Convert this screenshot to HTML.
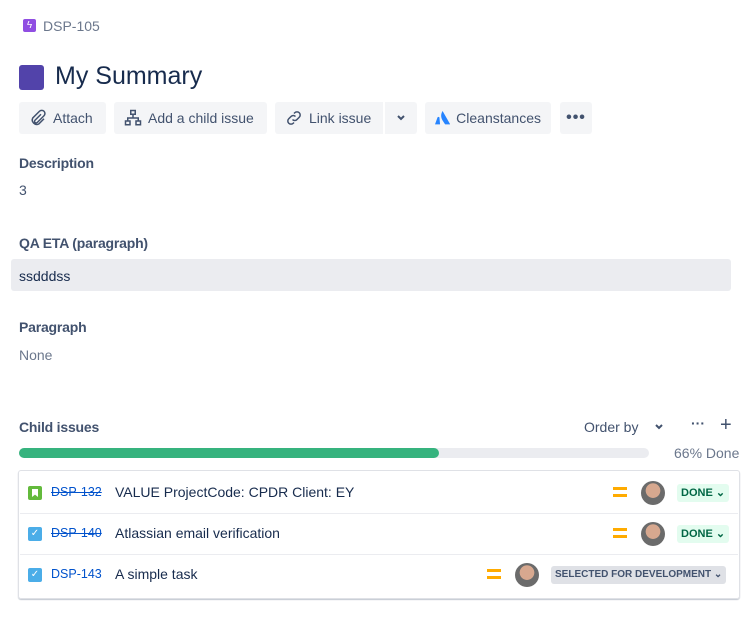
<!DOCTYPE html><html><head><style>
body{margin:0;width:756px;height:625px;background:#fff;font-family:"Liberation Sans",sans-serif;color:#172b4d;position:relative;overflow:hidden}
.a{position:absolute;white-space:nowrap}
.btn{position:absolute;top:102px;height:32px;background:#f4f5f7;border-radius:3px;font-size:14px;color:#42526e;display:flex;align-items:center;gap:6px;padding:0 10px;box-sizing:border-box}
.lbl{font-size:14px;font-weight:bold;color:#42526e;letter-spacing:-0.2px}
.row{position:absolute;left:20px;width:718px;height:41px;border-bottom:1px solid #ebecf0;font-size:14px}
.key{position:absolute;left:31px;top:13px;font-size:12.5px;color:#0052cc}
.sum{position:absolute;left:95px;top:12px;color:#172b4d}
.pri{position:absolute;width:14px;height:3px;background:#ffab00}
.av{position:absolute;width:24px;height:24px;border-radius:50%;background:radial-gradient(circle at 50% 40%,#d7a88f 0 38%,#6b6b6b 40%);}
.st{position:absolute;height:18px;border-radius:3px;font-size:11px;font-weight:bold;line-height:18px;padding:0 4px}
</style></head><body>
<div class="a" style="left:23px;top:19px;width:13px;height:13px;background:#904ee2;border-radius:2px;color:#fff;font-size:10px;text-align:center;line-height:13px">ϟ</div>
<div class="a" style="left:43px;top:18px;font-size:14px;color:#6b778c">DSP-105</div>
<div class="a" style="left:19px;top:65px;width:25px;height:25px;background:#5243aa;border-radius:3px"></div>
<div class="a" style="left:55px;top:62px;font-size:25px;color:#172b4d">My Summary</div>
<div class="btn" style="left:19px;width:87px"><svg width="18" height="18" viewBox="0 0 24 24" fill="none" stroke="#42526e" stroke-width="2"><path d="M16 7l-8 8a2 2 0 003 3l9-9a4 4 0 00-6-6l-9 9a6 6 0 008 8l7-7"/></svg>Attach</div>
<div class="btn" style="left:114px;width:153px"><svg width="18" height="18" viewBox="0 0 24 24" fill="none" stroke="#42526e" stroke-width="2"><rect x="9" y="2" width="6" height="5"/><rect x="2" y="16" width="6" height="5"/><rect x="16" y="16" width="6" height="5"/><path d="M12 7v5M5 16v-4h14v4"/></svg>Add a child issue</div>
<div class="btn" style="left:275px;width:108px;border-radius:3px 0 0 3px"><svg width="18" height="18" viewBox="0 0 24 24" fill="none" stroke="#42526e" stroke-width="2"><path d="M10 14a4 4 0 006 0l3-3a4 4 0 00-6-6l-1 1M14 10a4 4 0 00-6 0l-3 3a4 4 0 006 6l1-1"/></svg>Link issue</div>
<div class="btn" style="left:385px;width:32px;border-radius:0 3px 3px 0;justify-content:center"><svg width="10" height="8" viewBox="0 0 10 8"><path d="M2 2l3 3 3-3" fill="none" stroke="#42526e" stroke-width="2"/></svg></div>
<div class="btn" style="left:425px;width:126px"><svg width="18" height="18" viewBox="0 0 24 24"><path d="M7 11c-1-1-2-1-3 0L0 22h8zM12 1c-3 5-3 10 0 15l4 6h8z" fill="#2684ff"/></svg>Cleanstances</div>
<div class="btn" style="left:560px;width:32px;justify-content:center;font-weight:bold;font-size:16px;letter-spacing:1px">•••</div>
<div class="a lbl" style="left:19px;top:155px">Description</div>
<div class="a" style="left:19px;top:182px;font-size:14px;color:#42526e">3</div>
<div class="a lbl" style="left:19px;top:235px">QA ETA (paragraph)</div>
<div class="a" style="left:11px;top:259px;width:720px;height:32px;background:#ebecf0;border-radius:3px"></div>
<div class="a" style="left:19px;top:268px;font-size:14px">ssdddss</div>
<div class="a lbl" style="left:19px;top:319px">Paragraph</div>
<div class="a" style="left:19px;top:347px;font-size:14px;color:#6b778c">None</div>
<div class="a lbl" style="left:19px;top:419px">Child issues</div>
<div class="a" style="left:584px;top:419px;font-size:14px;color:#42526e">Order by</div>
<svg class="a" style="left:654px;top:423px" width="10" height="8" viewBox="0 0 10 8"><path d="M2 2l3 3 3-3" fill="none" stroke="#42526e" stroke-width="2"/></svg>
<div class="a" style="left:691px;top:415px;font-size:14px;color:#42526e;font-weight:bold">···</div>
<div class="a" style="left:720px;top:414px;font-size:20px;color:#42526e">+</div>
<div class="a" style="left:19px;top:448px;width:630px;height:10px;background:#ebecf0;border-radius:5px"></div>
<div class="a" style="left:19px;top:448px;width:420px;height:10px;background:#36b37e;border-radius:5px"></div>
<div class="a" style="left:674px;top:445px;font-size:14px;color:#6b778c">66% Done</div>
<div class="a" style="left:18px;top:470px;width:720px;height:127px;border:1px solid #dfe1e6;border-radius:3px;box-shadow:0 1px 1px #c1c7d0"></div>
<div class="row" style="top:472px">
<div class="a" style="left:8px;top:14px;width:14px;height:14px;background:#63ba3c;border-radius:2px"><div style="margin:3px 4px;width:6px;height:8px;background:#fff;clip-path:polygon(0 0,100% 0,100% 100%,50% 70%,0 100%)"></div></div>
<div class="key" style="text-decoration:line-through">DSP-132</div><div class="sum">VALUE ProjectCode: CPDR Client: EY</div>
<div class="pri" style="left:593px;top:15px"></div><div class="pri" style="left:593px;top:22px"></div>
<div class="av" style="left:621px;top:9px"></div>
<div class="st" style="left:657px;top:12px;background:#e3fcef;color:#006644">DONE ⌄</div></div>
<div class="row" style="top:513px">
<div class="a" style="left:8px;top:14px;width:14px;height:14px;background:#4bade8;border-radius:2px;color:#fff;font-size:10px;text-align:center;line-height:14px">✓</div>
<div class="key" style="text-decoration:line-through">DSP-140</div><div class="sum">Atlassian email verification</div>
<div class="pri" style="left:593px;top:15px"></div><div class="pri" style="left:593px;top:22px"></div>
<div class="av" style="left:621px;top:9px"></div>
<div class="st" style="left:657px;top:12px;background:#e3fcef;color:#006644">DONE ⌄</div></div>
<div class="row" style="top:554px;border:0">
<div class="a" style="left:8px;top:14px;width:14px;height:14px;background:#4bade8;border-radius:2px;color:#fff;font-size:10px;text-align:center;line-height:14px">✓</div>
<div class="key">DSP-143</div><div class="sum">A simple task</div>
<div class="pri" style="left:467px;top:15px"></div><div class="pri" style="left:467px;top:22px"></div>
<div class="av" style="left:495px;top:9px"></div>
<div class="st" style="left:531px;top:12px;background:#dfe1e6;color:#42526e;font-size:10px">SELECTED FOR DEVELOPMENT ⌄</div></div>
</body></html>
